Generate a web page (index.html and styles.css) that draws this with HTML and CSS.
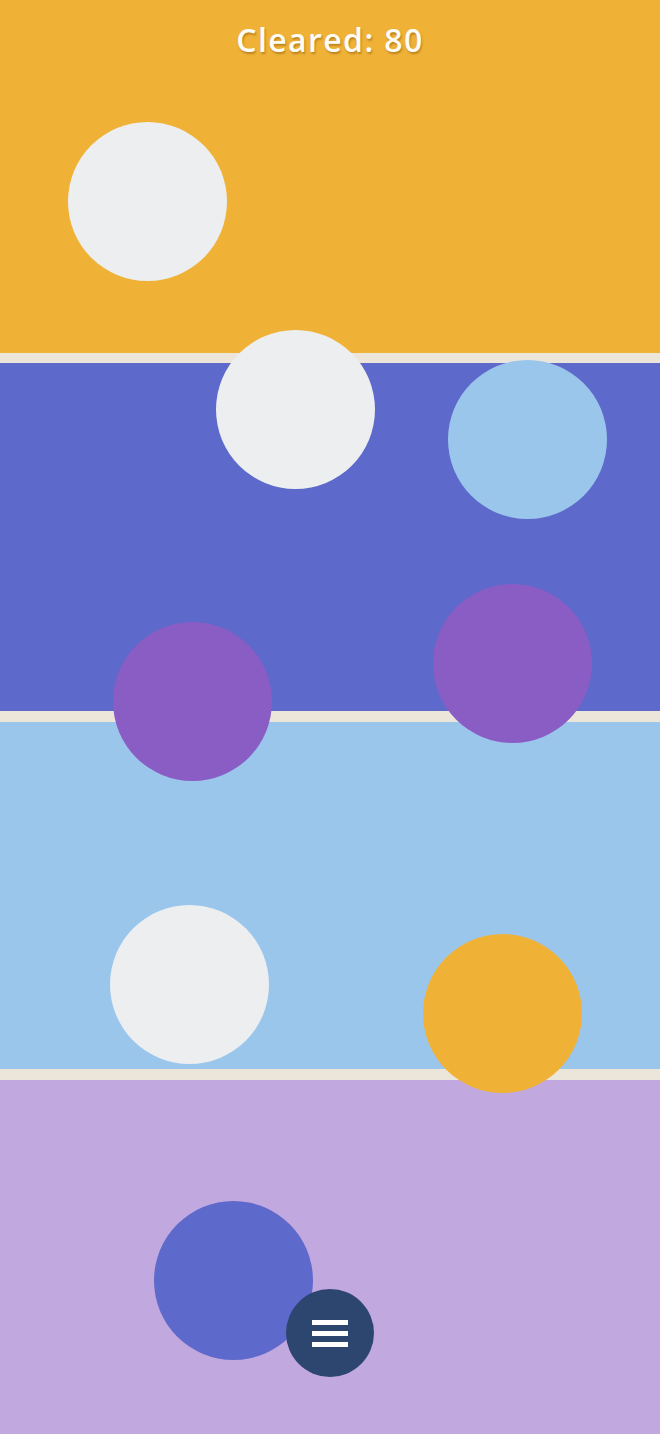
FILE: index.html
```
<!DOCTYPE html>
<html lang="en">
<head>
<meta charset="utf-8">
<title>Cleared</title>
<link rel="stylesheet" href="styles.css">
</head>
<body>
<div class="game">
  <div class="lanes">
    <div class="lane lane-yellow"></div>
    <div class="lane lane-blue"></div>
    <div class="lane lane-sky"></div>
    <div class="lane lane-lilac"></div>
  </div>
  <div class="score">Cleared: 80</div>
  <div class="ball ball-white" style="left:68px;top:122px"></div>
  <div class="ball ball-white" style="left:216px;top:330px"></div>
  <div class="ball ball-sky" style="left:448px;top:360px"></div>
  <div class="ball ball-purple" style="left:113px;top:622px"></div>
  <div class="ball ball-purple" style="left:433px;top:584px"></div>
  <div class="ball ball-white" style="left:110px;top:905px"></div>
  <div class="ball ball-yellow" style="left:423px;top:934px"></div>
  <div class="ball ball-blue" style="left:154px;top:1201px"></div>
  <button class="menu-btn" aria-label="Menu">
    <span class="bar"></span>
    <span class="bar"></span>
    <span class="bar"></span>
  </button>
</div>
</body>
</html>
```

FILE: styles.css
```
html, body {
  margin: 0;
  padding: 0;
}
body {
  width: 660px;
  height: 1434px;
  overflow: hidden;
  background: #ece5da;
  font-family: "Open Sans", "DejaVu Sans", sans-serif;
}
.game {
  position: relative;
  width: 660px;
  height: 1434px;
}
.lanes {
  display: flex;
  flex-direction: column;
  height: 100%;
}
.lane-yellow {
  height: 353px;
  background: #efb237;
  margin-bottom: 10px;
}
.lane-blue {
  height: 348px;
  background: #5d69cb;
  margin-bottom: 11px;
}
.lane-sky {
  height: 347px;
  background: #9bc6ec;
  margin-bottom: 11px;
}
.lane-lilac {
  flex: 1;
  background: #c1a8df;
}
.score {
  position: absolute;
  top: 18px;
  left: 0;
  right: 0;
  text-align: center;
  color: #fdfbf6;
  font-size: 32px;
  font-weight: 600;
  letter-spacing: 1.4px;
  line-height: 44px;
  text-shadow: 1px 2px 2px rgba(150, 95, 10, 0.55);
}
.ball {
  position: absolute;
  width: 159px;
  height: 159px;
  border-radius: 50%;
}
.ball-white { background: #eceef0; }
.ball-sky { background: #9bc6ec; }
.ball-purple { background: #8a5dc4; }
.ball-yellow { background: #efb237; }
.ball-blue { background: #5d69cb; }
.menu-btn {
  position: absolute;
  left: 286px;
  top: 1289px;
  width: 88px;
  height: 88px;
  border: none;
  border-radius: 50%;
  background: #2d466f;
  padding: 0;
  display: flex;
  flex-direction: column;
  align-items: center;
  justify-content: center;
  gap: 6px;
}
.bar {
  display: block;
  width: 36px;
  height: 5px;
  background: #ffffff;
}
```
